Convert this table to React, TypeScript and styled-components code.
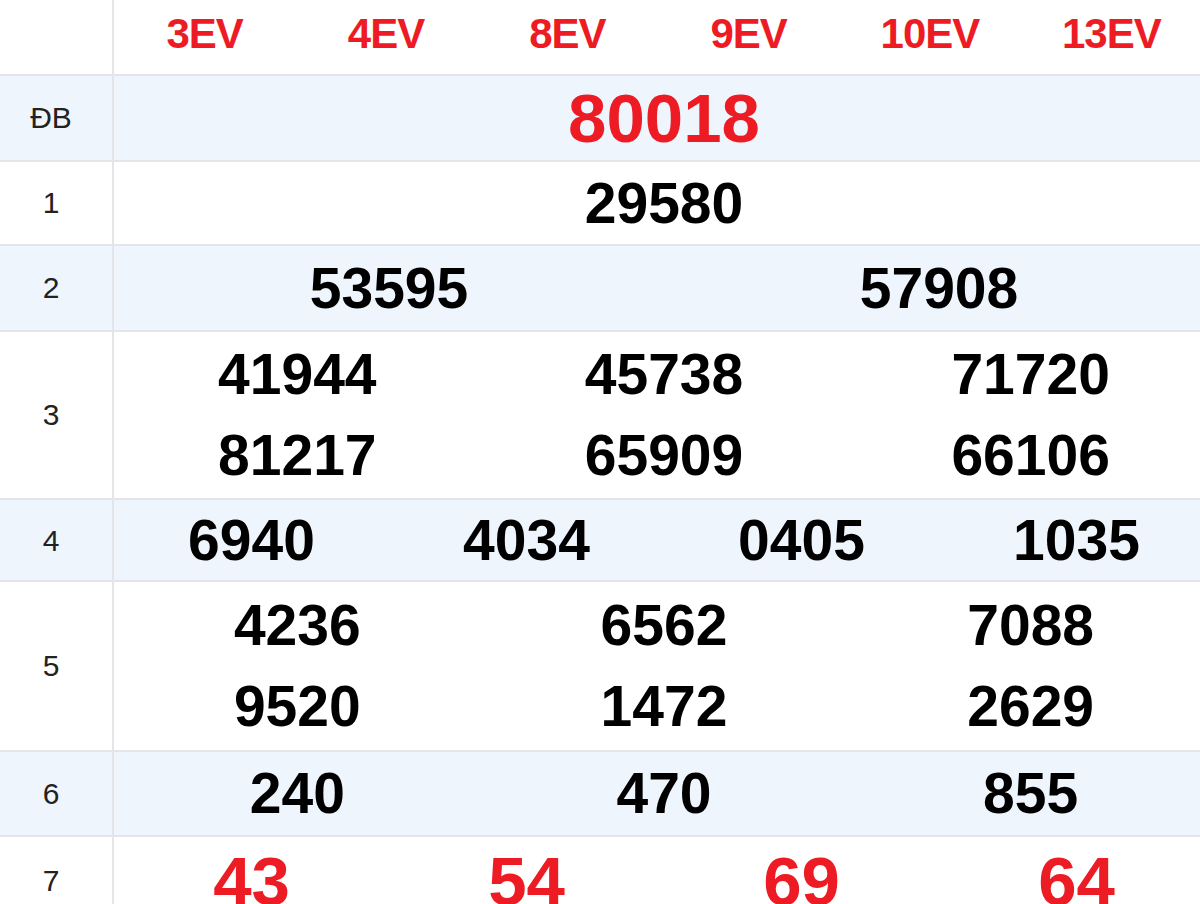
import React from "react";
import styled, { createGlobalStyle } from "styled-components";

const GlobalStyle = createGlobalStyle`
  html, body {
    margin: 0;
    padding: 0;
    background: #ffffff;
    overflow: hidden;
  }
  body {
    font-family: "Liberation Sans", Arial, sans-serif;
  }
`;

const Table = styled.div`
  width: 1214px;
  display: flex;
  flex-direction: column;
`;

const Row = styled.div<{ $h: number; $alt?: boolean }>`
  display: grid;
  grid-template-columns: 114px 1100px;
  height: ${(p) => p.$h}px;
  box-sizing: border-box;
  border-bottom: 2px solid #e3e5e9;
  background: ${(p) => (p.$alt ? "#eef5fd" : "#ffffff")};
`;

const Label = styled.div`
  display: flex;
  align-items: center;
  justify-content: center;
  box-sizing: border-box;
  padding-right: 10px;
  border-right: 2px solid #e3e5e9;
  font-size: 30px;
  color: #222222;
`;

const HeaderCodes = styled.div`
  display: grid;
  grid-template-columns: repeat(6, 1fr);
  width: 1088px;
  align-items: center;
  justify-items: center;
  padding-bottom: 6px;
`;

const Code = styled.span`
  color: #ed1c24;
  font-weight: 700;
  font-size: 42px;
  letter-spacing: -1px;
`;

const Numbers = styled.div<{ $cols: number }>`
  display: grid;
  grid-template-columns: repeat(${(p) => p.$cols}, 1fr);
  align-content: center;
  justify-items: center;
`;

const Num = styled.span<{ $red?: boolean }>`
  font-weight: 700;
  font-size: ${(p) => (p.$red ? 69 : 57)}px;
  line-height: 81px;
  color: ${(p) => (p.$red ? "#ed1c24" : "#000000")};
`;

type Prize = {
  label: string;
  h: number;
  cols: number;
  values: string[];
  red?: boolean;
};

const prizes: Prize[] = [
  { label: "ĐB", h: 86, cols: 1, values: ["80018"], red: true },
  { label: "1", h: 84, cols: 1, values: ["29580"] },
  { label: "2", h: 86, cols: 2, values: ["53595", "57908"] },
  {
    label: "3",
    h: 168,
    cols: 3,
    values: ["41944", "45738", "71720", "81217", "65909", "66106"],
  },
  { label: "4", h: 82, cols: 4, values: ["6940", "4034", "0405", "1035"] },
  {
    label: "5",
    h: 170,
    cols: 3,
    values: ["4236", "6562", "7088", "9520", "1472", "2629"],
  },
  { label: "6", h: 85, cols: 3, values: ["240", "470", "855"] },
  { label: "7", h: 90, cols: 4, values: ["43", "54", "69", "64"], red: true },
];

const codes = ["3EV", "4EV", "8EV", "9EV", "10EV", "13EV"];

export default function App() {
  return (
    <>
      <GlobalStyle />
      <Table>
        <Row $h={76}>
          <Label />
          <HeaderCodes>
            {codes.map((c) => (
              <Code key={c}>{c}</Code>
            ))}
          </HeaderCodes>
        </Row>
        {prizes.map((p, i) => (
          <Row key={p.label} $h={p.h} $alt={i % 2 === 0}>
            <Label>{p.label}</Label>
            <Numbers $cols={p.cols}>
              {p.values.map((v, j) => (
                <Num key={j} $red={p.red}>
                  {v}
                </Num>
              ))}
            </Numbers>
          </Row>
        ))}
      </Table>
    </>
  );
}
